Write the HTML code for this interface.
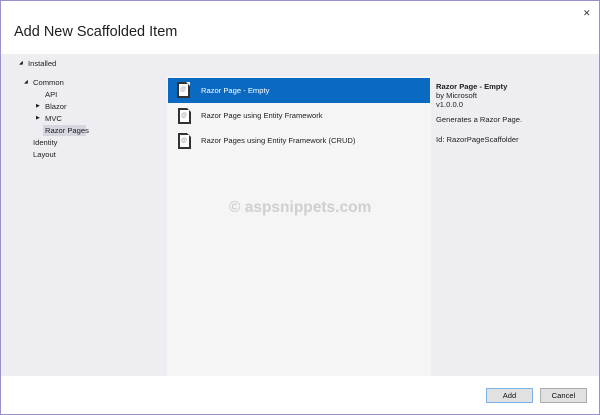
<!DOCTYPE html>
<html><head><style>
body{margin:0;width:600px;height:415px;overflow:hidden;font-family:"Liberation Sans",sans-serif;background:#fff}
.win{position:absolute;left:0;top:0;width:598px;height:413px;border:1px solid #9b8fd0;background:#fff}
.t{position:absolute;font-size:7.6px;color:#1e1e1e;white-space:nowrap}
.gray{position:absolute;left:0;top:53px;width:598px;height:322px;background:#eeeef2}
.mid{position:absolute;left:166px;top:75px;width:264px;height:300px;background:#f5f5f5}
.sel{position:absolute;left:167px;top:77px;width:262px;height:25px;background:#0a6ac2}
.ico{position:absolute;width:9px;height:12px;border:2px solid #333;background:#fff}
.ico:before{content:"";position:absolute;right:-2px;top:-2px;border-style:solid;border-width:0 4px 4px 0;border-color:transparent #f5f5f5 transparent transparent}
.ico:after{content:"@";position:absolute;left:1px;top:3px;font-size:6px;color:#999}
.btn{position:absolute;top:387px;width:45px;height:13px;border:1px solid #adadad;background:#e1e1e1;font-size:7.6px;text-align:center;line-height:13px;color:#111}
</style></head><body>
<div class="win">
<div style="position:absolute;left:13px;top:23px;font-size:14.5px;color:#1e1e1e">Add New Scaffolded Item</div>
<div style="position:absolute;left:582px;top:7px;font-size:9px;color:#333">✕</div>
<div class="gray"></div>
<div class="t" style="left:18px;top:59px;font-size:5px">◢</div>
<div class="t" style="left:27px;top:58px">Installed</div>
<div class="t" style="left:23px;top:78px;font-size:5px">◢</div>
<div class="t" style="left:32px;top:77px">Common</div>
<div class="t" style="left:44px;top:89px">API</div>
<div class="t" style="left:35px;top:102px;font-size:5px">▶</div>
<div class="t" style="left:44px;top:101px">Blazor</div>
<div class="t" style="left:35px;top:114px;font-size:5px">▶</div>
<div class="t" style="left:44px;top:113px">MVC</div>
<div style="position:absolute;left:42px;top:124px;width:43px;height:11px;background:#d6d6e0"></div>
<div class="t" style="left:44px;top:125px">Razor Pages</div>
<div class="t" style="left:32px;top:137px">Identity</div>
<div class="t" style="left:32px;top:149px">Layout</div>
<div class="mid"></div>
<div class="sel"></div>
<div class="ico" style="left:176px;top:81px"></div>
<div class="t" style="left:200px;top:85px;color:#fff">Razor Page - Empty</div>
<div class="ico" style="left:177px;top:107px"></div>
<div class="t" style="left:200px;top:110px">Razor Page using Entity Framework</div>
<div class="ico" style="left:177px;top:132px"></div>
<div class="t" style="left:200px;top:135px">Razor Pages using Entity Framework (CRUD)</div>
<div style="position:absolute;left:228px;top:198px;font:bold 15.5px 'Liberation Sans',sans-serif;color:#cfcfcf">© aspsnippets.com</div>
<div class="t" style="left:435px;top:81px;font-weight:bold">Razor Page - Empty</div>
<div class="t" style="left:435px;top:90px">by Microsoft</div>
<div class="t" style="left:435px;top:99px">v1.0.0.0</div>
<div class="t" style="left:435px;top:114px">Generates a Razor Page.</div>
<div class="t" style="left:435px;top:134px">Id: RazorPageScaffolder</div>
<div class="btn" style="left:485px;border-color:#7eb4ea">Add</div>
<div class="btn" style="left:539px">Cancel</div>
</div>
</body></html>
